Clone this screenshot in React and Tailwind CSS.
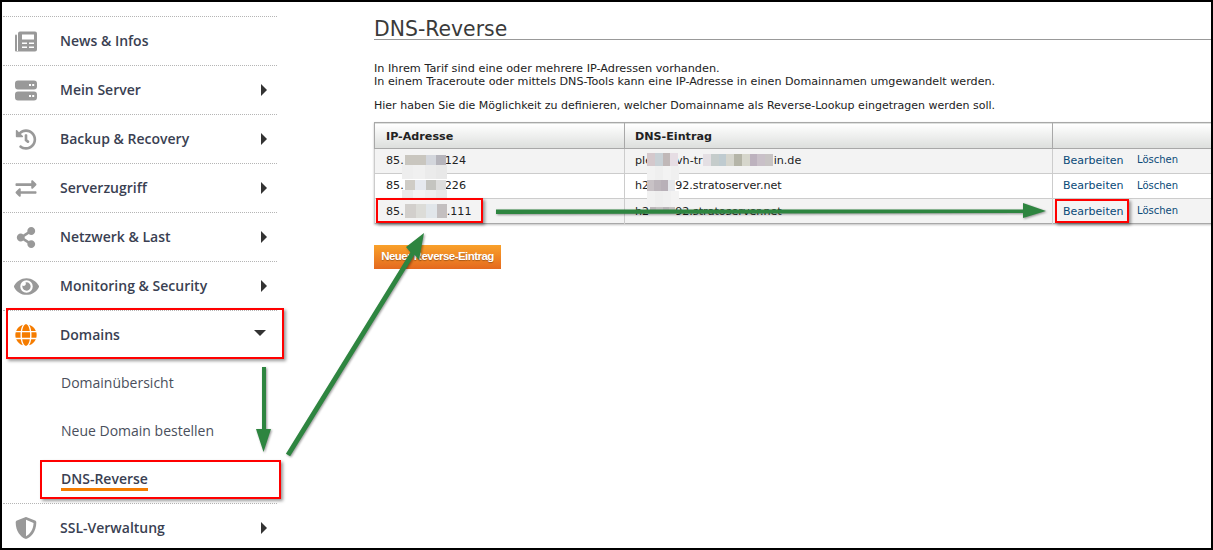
import { FaHistory, FaExchangeAlt, FaShareAlt, FaEye, FaGlobe, FaShieldAlt } from 'react-icons/fa';

function NewsIcon({ className }) {
  return (
    <svg className={className} viewBox="0 0 22 20" fill="currentColor">
      <rect x="0" y="3" width="2" height="17" rx="1" />
      <path fillRule="evenodd" d="M5 0h15a2 2 0 012 2v16a2 2 0 01-2 2H1.5v-.5H3V2a2 2 0 012-2zm2 3v5h12V3zm0 8v1.6h5V11zm7 0v1.6h5V11zm-7 4v1.6h5V15zm7 0v1.6h5V15z" />
    </svg>
  );
}

function ServerIcon({ className }) {
  return (
    <svg className={className} viewBox="0 0 22 20" fill="currentColor">
      <path fillRule="evenodd" d="M3 0h16a3 3 0 013 3v3a3 3 0 01-3 3H3a3 3 0 01-3-3V3a3 3 0 013-3zm11 3.4v2h2v-2zm3.2 0v2h2v-2zM3 11h16a3 3 0 013 3v3a3 3 0 01-3 3H3a3 3 0 01-3-3v-3a3 3 0 013-3zm11 3.4v2h2v-2zm3.2 0v2h2v-2z" />
    </svg>
  );
}

const menu = [
  { label: 'News & Infos', Icon: NewsIcon },
  { label: 'Mein Server', Icon: ServerIcon, arrow: true },
  { label: 'Backup & Recovery', Icon: FaHistory, arrow: true },
  { label: 'Serverzugriff', Icon: FaExchangeAlt, arrow: true },
  { label: 'Netzwerk & Last', Icon: FaShareAlt, arrow: true },
  { label: 'Monitoring & Security', Icon: FaEye, arrow: true, large: true },
];

const rows = [
  { ip: 41, ipEnd: '124', dns: 'ple', gap: 24, mid: 'vh-tr', gap2: 71, dnsEnd: 'in.de', bg: 'bg-[#f3f3f3]' },
  { ip: 41, ipEnd: '226', dns: 'h2', gap: 26, dnsEnd: '92.stratoserver.net', bg: 'bg-white' },
  { ip: 43, ipEnd: '.111', dns: 'h2', gap: 26, dnsEnd: '92.stratoserver.net', bg: 'bg-[#f3f3f3]' },
];

// pixelated blur patches that hide parts of the addresses
const patches = [
  { x: 402, y: 165, cols: ['#eeeeee', '#f0f0f0', '#ebebeb', '#e8e8e8'], w: 45, h: 14 },
  { x: 402, y: 190, cols: ['#ebebeb', '#f4f4f4', '#efefef', '#e8e8e8'], w: 45, h: 8 },
  { x: 405, y: 155, cols: ['#c9c6bf', '#c9c6bf', '#d3d6dc', '#b5b4bb'], w: 41, h: 10 },
  { x: 405, y: 180, cols: ['#cfccc6', '#e6e9ef', '#c4c4c0', '#dddddd'], w: 41, h: 10 },
  { x: 405, y: 204, cols: ['#d2cfcc', '#dcdcd8', '#e1e6ea', '#c3bfc0'], w: 42, h: 14 },
  { x: 647, y: 166, cols: ['#f2f2f2', '#efefef', '#f3f3f3', '#f0f0f0'], w: 32, h: 14 },
  { x: 647, y: 191, cols: ['#f1f1f1', '#eeeeee', '#f0f0f0', '#f3f3f3'], w: 32, h: 16 },
  { x: 647, y: 153, cols: ['#d4c8cc', '#c8d0d5', '#c0b8b8', '#e6dde4'], w: 31, h: 13 },
  { x: 647, y: 180, cols: ['#c8c2c6', '#bdb6bc', '#b8b0b8', '#e6e8ec'], w: 28, h: 11 },
  { x: 650, y: 207, cols: ['#bdb7bb', '#c6c2c4', '#b9b4b8', '#c5c0c2'], w: 25, h: 3 },
  { x: 703, y: 154, cols: ['#e4dfe3', '#c5cccb', '#bfcbd0', '#d5d5cd', '#b5b5a8', '#d6d6cc', '#bdb2be', '#c9c0c8', '#c8c4c4'], w: 70, h: 12 },
];

function Patch({ x, y, w, h, cols }) {
  return (
    <div className="absolute flex" style={{ left: x, top: y, width: w, height: h }}>
      {cols.map((c, i) => (
        <div key={i} className="flex-1" style={{ backgroundColor: c }}></div>
      ))}
    </div>
  );
}

function MenuRow({ label, Icon, arrow, large }) {
  return (
    <div className="h-[49px] border-t border-dotted border-[#b5b5b5] flex items-center pl-[12px] pr-[10px]">
      <div className="w-[22px] flex justify-center shrink-0">
        <Icon className={`${large ? 'w-[25px] h-[25px]' : 'w-[22px] h-[21px]'} shrink-0 text-[#999999]`} />
      </div>
      <span className="ml-[23px] mb-[2px] flex-1 text-[14px] font-semibold text-[#3a3f52]">{label}</span>
      {arrow && <span className="w-0 h-0 border-y-[6px] border-y-transparent border-l-[6px] border-l-[#333333]"></span>}
    </div>
  );
}

export default function App() {
  return (
    <div className="relative w-[1213px] h-[550px] overflow-hidden bg-white border-2 border-black flex font-['Open_Sans',sans-serif]">

      {/* Sidebar */}
      <div className="w-[274px] pt-[14px] shrink-0 ml-px">
        {menu.map((m) => (
          <MenuRow key={m.label} {...m} />
        ))}
        <div className="h-[49px] border-t border-dotted border-[#b5b5b5] flex items-center pl-[12px] pr-[10px]">
          <FaGlobe className="w-[22px] h-[22px] text-[#f57c00] shrink-0" />
          <span className="ml-[23px] mb-[2px] flex-1 text-[14px] font-semibold text-[#3a3f52]">Domains</span>
          <span className="w-0 h-0 mr-[1px] mb-[4px] border-x-[6px] border-x-transparent border-t-[6px] border-t-[#333333]"></span>
        </div>
        <div className="pl-[58px] text-[14px] text-[#4a4f5c]">
          <div className="h-[48px] pb-[2px] flex items-center">Domainübersicht</div>
          <div className="h-[48px] pb-[2px] flex items-center">Neue Domain bestellen</div>
          <div className="h-[48px] pt-[1px] flex items-center">
            <span className="border-b-[3px] border-[#f57c00] font-semibold text-[#3a3f52] leading-[19px]">DNS-Reverse</span>
          </div>
        </div>
        <div className="h-[49px] border-t border-dotted border-[#b5b5b5] flex items-center pl-[12px] pr-[10px]">
          <FaShieldAlt className="w-[22px] h-[22px] text-[#999999] shrink-0" />
          <span className="ml-[23px] mb-[2px] flex-1 text-[14px] font-semibold text-[#3a3f52]">SSL-Verwaltung</span>
          <span className="w-0 h-0 border-y-[6px] border-y-transparent border-l-[6px] border-l-[#333333]"></span>
        </div>
      </div>

      {/* Main */}
      <div className="ml-[97px] flex-1 min-w-0 font-['DejaVu_Sans',sans-serif] text-[#222222]">
        <h1 className="mt-[13px] h-[25px] border-b border-[#999999] text-[20.4px] leading-[29px] text-[#3a3a3a]">DNS-Reverse</h1>
        <p className="mt-[22px] text-[11.15px] leading-[13px]">
          <span className="text-[11.28px]">In Ihrem Tarif sind eine oder mehrere IP-Adressen vorhanden.</span><br />
          In einem Traceroute oder mittels DNS-Tools kann eine IP-Adresse in einen Domainnamen umgewandelt werden.
        </p>
        <p className="mt-[11px] text-[11.03px] leading-[13px]">
          Hier haben Sie die Möglichkeit zu definieren, welcher Domainname als Reverse-Lookup eingetragen werden soll.
        </p>

        <table className="mt-[10px] w-[840px] table-fixed border-collapse text-[11.15px] shadow-[0_1px_2px_rgba(0,0,0,0.25)]">
          <thead>
            <tr className="h-[26px] bg-gradient-to-b from-white to-[#dddfdd] border-y border-[#a8a8a8] font-bold text-[#222222]">
              <th className="w-[250px] pl-[11px] pt-[3px] text-left border-x border-[#a8a8a8]">IP-Adresse</th>
              <th className="w-[428px] pl-[10px] pt-[3px] text-left border-r border-[#a8a8a8]">DNS-Eintrag</th>
              <th></th>
            </tr>
          </thead>
          <tbody>
            {rows.map((r, i) => (
              <tr key={i} className={`h-[25px] border-b ${i === 2 ? 'border-[#a8a8a8]' : 'border-[#cccccc]'} ${r.bg}`}>
                <td className={`pl-[11px] border-x border-[#cccccc] ${i === 2 ? 'pt-[2px]' : ''}`}>85.<span className="inline-block" style={{ width: r.ip }}></span>{r.ipEnd}</td>
                <td className={`pl-[10px] border-r border-[#cccccc] ${i === 2 ? 'pt-[2px]' : ''}`}>
                  {r.dns}<span className="inline-block" style={{ width: r.gap }}></span>{r.mid}
                  {r.mid && <span className="inline-block" style={{ width: r.gap2 }}></span>}{r.dnsEnd}
                </td>
                <td className={`pl-[10px] text-[#0a4a78] ${i === 2 ? 'pt-[2px]' : ''}`}>
                  <div className="flex items-center">
                    <span className="w-[74px] text-[11px]">Bearbeiten</span>
                    <span className={`text-[10px] ${i === 1 ? 'mb-[1px]' : 'mb-[3px]'}`}>Löschen</span>
                  </div>
                </td>
              </tr>
            ))}
          </tbody>
        </table>

        <button className="mt-[21px] h-[24px] w-[127px] whitespace-nowrap bg-gradient-to-b from-[#f9a12a] to-[#e4691f] text-white text-[11.5px] tracking-[-0.55px] font-bold font-['Liberation_Sans',sans-serif] [text-shadow:0_1px_1px_rgba(0,0,0,0.3)]">
          Neuer Reverse-Eintrag
        </button>
      </div>

      {/* Screenshot annotations, drawn over the page */}
      <div className="absolute -left-[2px] -top-[2px] w-[1213px] h-[550px] pointer-events-none">
        {patches.map((p, i) => (
          <Patch key={i} {...p} />
        ))}
        <div className="absolute left-[6px] top-[308px] w-[278px] h-[51px] border-2 border-[#ff0000] shadow-[2px_2px_3px_rgba(0,0,0,0.4)]"></div>
        <div className="absolute left-[40px] top-[460px] w-[241px] h-[39px] border-2 border-[#ff0000] shadow-[2px_2px_3px_rgba(0,0,0,0.4)]"></div>
        <div className="absolute left-[376px] top-[198px] w-[107px] h-[25px] border-2 border-[#ff0000] shadow-[2px_2px_3px_rgba(0,0,0,0.4)]"></div>
        <div className="absolute left-[1055px] top-[199px] w-[74px] h-[24px] border-2 border-[#ff0000] shadow-[2px_2px_3px_rgba(0,0,0,0.4)]"></div>

        <svg className="absolute left-0 top-0 drop-shadow-[1px_1px_1px_rgba(0,0,0,0.4)]" width="1213" height="550" viewBox="0 0 1213 550">
          <path d="M262 367h4v62h5l-7.5 23-7.5-23h6z" fill="#2e8540" />
          <path d="M285.9 453.7L410.4 252.2 406 247 424 233 419 260 414.6 254.8 290.1 456.3z" fill="#2e8540" />
          <path d="M496 209.5h527v-6.5l23 8-23 7v-5l-527 1z" fill="#2e8540" />
        </svg>
      </div>
    </div>
  );
}
